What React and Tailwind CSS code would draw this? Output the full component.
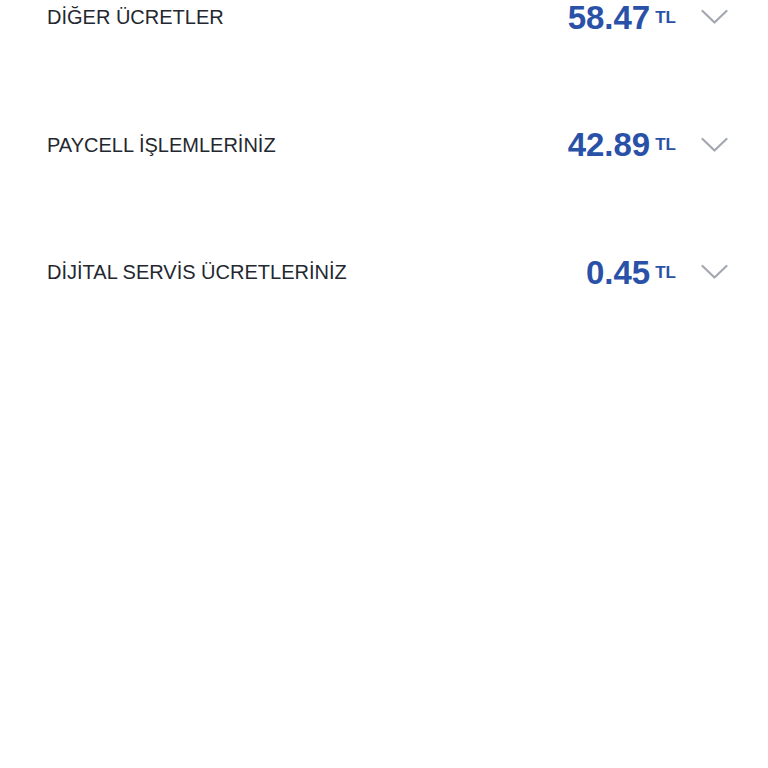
const items = [
  { label: 'DİĞER ÜCRETLER', amount: '58.47' },
  { label: 'PAYCELL İŞLEMLERİNİZ', amount: '42.89' },
  { label: 'DİJİTAL SERVİS ÜCRETLERİNİZ', amount: '0.45' },
];

const Chevron = () => (
  <svg width="27" height="16" viewBox="0 0 27 16" fill="none" className="ml-[25px]">
    <path d="M1.5 2 13.5 13.5 25.5 2" stroke="#a3a7b2" strokeWidth="2.2" strokeLinecap="round" strokeLinejoin="round" />
  </svg>
);

const App = () => {
  return (
    <div className="w-[768px] h-[768px] bg-white overflow-hidden font-['Liberation_Sans',Arial,sans-serif]">
      <div className="flex flex-col gap-[93.5px] pl-[47px] pr-[40px]">
        {items.map((item) => (
          <div key={item.label} className="h-[34px] flex items-center justify-between">
            <span className="text-[20px] text-[#23272f] leading-none">{item.label}</span>
            <div className="flex items-center">
              <div className="flex items-start">
                <span className="text-[33px] font-bold text-[#2a51a8] leading-none">{item.amount}</span>
                <span className="text-[17px] font-bold text-[#2a51a8] leading-none ml-[5px] mt-[8px]">TL</span>
              </div>
              <Chevron />
            </div>
          </div>
        ))}
      </div>
    </div>
  );
};

export default App;
